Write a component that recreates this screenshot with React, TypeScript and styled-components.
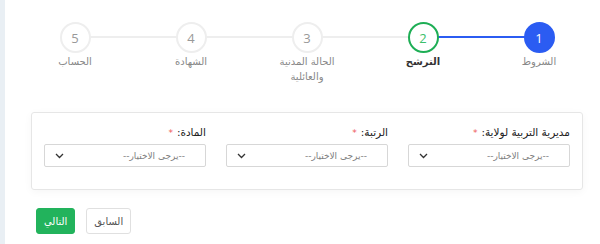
import React from 'react'
import styled, { createGlobalStyle } from 'styled-components'

const GlobalStyle = createGlobalStyle`
	* { box-sizing: border-box; }
	body {
		margin: 0;
		background: #fff;
		font-family: 'DejaVu Sans', 'Noto Sans', sans-serif;
		color: #333;
	}
`

type StepState = 'done' | 'active' | 'idle'

type Step = {
	num: number
	label: string[]
	state: StepState
}

const steps: Step[] = [
	{ num: 1, label: ['الشروط'], state: 'done' },
	{ num: 2, label: ['الترشح'], state: 'active' },
	{ num: 3, label: ['الحالة المدنية', 'والعائلية'], state: 'idle' },
	{ num: 4, label: ['الشهادة'], state: 'idle' },
	{ num: 5, label: ['الحساب'], state: 'idle' },
]

const fields = ['مديرية التربية لولاية:', 'الرتبة:', 'المادة:']

const Layout = styled.div`
	display: flex;
	min-height: 244px;
`

const SideStrip = styled.div`
	width: 5px;
	background: #e9eff4;
	flex-shrink: 0;
`

const Main = styled.main`
	flex: 1;
	direction: rtl;
	padding: 22px 3px 0 12px;
`

const Stepper = styled.ol`
	display: grid;
	grid-template-columns: repeat(5, 1fr);
	margin: 0;
	padding: 0;
	list-style: none;
	height: 90px;
`

const StepItem = styled.li<{ $line?: 'blue' | 'gray' }>`
	position: relative;
	display: flex;
	flex-direction: column;
	align-items: center;

	${({ $line }) =>
		$line &&
		`
		&::after {
			content: '';
			position: absolute;
			top: 14px;
			left: -50%;
			width: 100%;
			height: 2px;
			background: ${$line === 'blue' ? '#2b5cf2' : '#eeeeee'};
			z-index: 0;
		}
	`}
`

const Circle = styled.span<{ $state: StepState }>`
	position: relative;
	z-index: 1;
	width: 31px;
	height: 31px;
	border-radius: 50%;
	display: flex;
	align-items: center;
	justify-content: center;
	font-family: 'Open Sans', sans-serif;
	font-size: 13px;
	background: ${({ $state }) => ($state === 'done' ? '#2b5cf2' : '#fff')};
	color: ${({ $state }) =>
		$state === 'done' ? '#fff' : $state === 'active' ? '#3cbf6a' : '#999'};
	border: 2px solid
		${({ $state }) =>
			$state === 'done' ? '#2b5cf2' : $state === 'active' ? '#1eae55' : '#eeeeee'};
`

const StepLabel = styled.span<{ $active?: boolean }>`
	margin-top: 1px;
	font-size: 10px;
	line-height: 15px;
	text-align: center;
	color: ${({ $active }) => ($active ? '#333' : '#888')};
	font-weight: ${({ $active }) => ($active ? 700 : 400)};
`

const Card = styled.section`
	margin: 0 14px;
	border: 1px solid #e6e6e6;
	border-radius: 3px;
	box-shadow: 0 2px 8px rgba(0, 0, 0, 0.04);
	padding: 12px 12px 22px 12px;
	display: grid;
	grid-template-columns: repeat(3, 1fr);
	column-gap: 20px;
`

const Field = styled.div`
	display: flex;
	flex-direction: column;
`

const Label = styled.label`
	font-size: 10.5px;
	font-weight: 400;
	color: #222;
	height: 15px;
	margin-bottom: 4px;
	line-height: 15px;
`

const Required = styled.span`
	color: #ee5a5a;
	margin-right: 4px;
	font-size: 9px;
`

const SelectBox = styled.div`
	height: 23px;
	border: 1px solid #d7d7d7;
	border-radius: 2px;
	display: flex;
	align-items: center;
	justify-content: space-between;
	padding: 0 20px 0 10px;
	font-size: 9px;
	color: #808080;
	background: #fff;
`

const Actions = styled.div`
	display: flex;
	justify-content: flex-end;
	gap: 11px;
	margin: 18px 14px 0 19px;
`

const Button = styled.button<{ $primary?: boolean }>`
	height: 26px;
	padding: 0 7px;
	border-radius: 3px;
	font-family: inherit;
	font-size: 10px;
	cursor: pointer;
	background: ${({ $primary }) => ($primary ? '#22b35c' : '#fff')};
	color: ${({ $primary }) => ($primary ? '#fff' : '#555')};
	border: 1px solid ${({ $primary }) => ($primary ? '#22b35c' : '#e0e0e0')};
`

const Chevron = () => (
	<svg width='9' height='6' viewBox='0 0 9 6' fill='none'>
		<path d='M1 1l3.5 3.5L8 1' stroke='#333' strokeWidth='1.3' />
	</svg>
)

export default function App() {
	return (
		<>
			<GlobalStyle />
			<Layout>
				<SideStrip />
				<Main>
					<Stepper>
						{steps.map((step, i) => (
							<StepItem
								key={step.num}
								$line={i < steps.length - 1 ? (i === 0 ? 'blue' : 'gray') : undefined}
							>
								<Circle $state={step.state}>{step.num}</Circle>
								<StepLabel $active={step.state === 'active'}>
									{step.label.map((line) => (
										<div key={line}>{line}</div>
									))}
								</StepLabel>
							</StepItem>
						))}
					</Stepper>

					<Card>
						{fields.map((f) => (
							<Field key={f}>
								<Label>
									{f}
									<Required>*</Required>
								</Label>
								<SelectBox>
									<span>--يرجى الاختيار--</span>
									<Chevron />
								</SelectBox>
							</Field>
						))}
					</Card>

					<Actions>
						<Button>السابق</Button>
						<Button $primary>التالي</Button>
					</Actions>
				</Main>
			</Layout>
		</>
	)
}
